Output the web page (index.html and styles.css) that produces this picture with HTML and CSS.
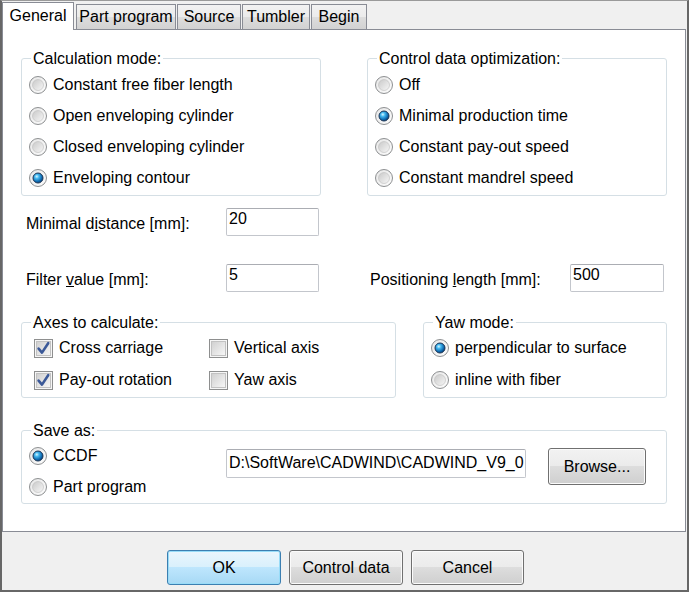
FILE: index.html
```html
<!DOCTYPE html>
<html>
<head>
<meta charset="utf-8">
<link rel="stylesheet" href="styles.css">
</head>
<body>
<svg class="defs" width="0" height="0" aria-hidden="true">
  <defs>
    <linearGradient id="rOuter" x1="0" y1="0" x2="1" y2="1">
      <stop offset="0" stop-color="#e6e6e6"/>
      <stop offset="1" stop-color="#fdfdfd"/>
    </linearGradient>
    <linearGradient id="rInner" x1="0" y1="0" x2="1" y2="1">
      <stop offset="0" stop-color="#c9c9c9"/>
      <stop offset="1" stop-color="#f7f7f7"/>
    </linearGradient>
    <radialGradient id="rDot" cx="0.38" cy="0.35" r="0.7">
      <stop offset="0" stop-color="#d8f6ff"/>
      <stop offset="0.3" stop-color="#43b8f0"/>
      <stop offset="0.75" stop-color="#0b63aa"/>
      <stop offset="1" stop-color="#073a6b"/>
    </radialGradient>
    <linearGradient id="cbInner" x1="0" y1="0" x2="1" y2="1">
      <stop offset="0" stop-color="#cfcfcf"/>
      <stop offset="1" stop-color="#f8f8f8"/>
    </linearGradient>
  </defs>
</svg>
<div class="window">
  <div class="tabs">
    <div class="tab tab-general active">General</div>
    <div class="tab tab-part">Part program</div>
    <div class="tab tab-source">Source</div>
    <div class="tab tab-tumbler">Tumbler</div>
    <div class="tab tab-begin">Begin</div>
  </div>
  <div class="panel">
    <div class="row-top">
      <fieldset class="group group-half">
        <legend>Calculation mode:</legend>
        <div class="opts">
          <div class="opt"><svg class="radio" viewBox="0 0 18 18"><circle cx="9" cy="9" r="8.5" fill="url(#rOuter)" stroke="#8d8f91"/><circle cx="9" cy="9" r="5.5" fill="url(#rInner)" stroke="#bdbdbd" stroke-width="0.6"/></svg><span>Constant free fiber length</span></div>
          <div class="opt"><svg class="radio" viewBox="0 0 18 18"><circle cx="9" cy="9" r="8.5" fill="url(#rOuter)" stroke="#8d8f91"/><circle cx="9" cy="9" r="5.5" fill="url(#rInner)" stroke="#bdbdbd" stroke-width="0.6"/></svg><span>Open enveloping cylinder</span></div>
          <div class="opt"><svg class="radio" viewBox="0 0 18 18"><circle cx="9" cy="9" r="8.5" fill="url(#rOuter)" stroke="#8d8f91"/><circle cx="9" cy="9" r="5.5" fill="url(#rInner)" stroke="#bdbdbd" stroke-width="0.6"/></svg><span>Closed enveloping cylinder</span></div>
          <div class="opt"><svg class="radio" viewBox="0 0 18 18"><circle cx="9" cy="9" r="8.5" fill="url(#rOuter)" stroke="#8d8f91"/><circle cx="9" cy="9" r="5" fill="url(#rDot)" stroke="#1b3556" stroke-width="1"/></svg><span>Enveloping contour</span></div>
        </div>
      </fieldset>
      <fieldset class="group group-half">
        <legend>Control data optimization:</legend>
        <div class="opts">
          <div class="opt"><svg class="radio" viewBox="0 0 18 18"><circle cx="9" cy="9" r="8.5" fill="url(#rOuter)" stroke="#8d8f91"/><circle cx="9" cy="9" r="5.5" fill="url(#rInner)" stroke="#bdbdbd" stroke-width="0.6"/></svg><span>Off</span></div>
          <div class="opt"><svg class="radio" viewBox="0 0 18 18"><circle cx="9" cy="9" r="8.5" fill="url(#rOuter)" stroke="#8d8f91"/><circle cx="9" cy="9" r="5" fill="url(#rDot)" stroke="#1b3556" stroke-width="1"/></svg><span>Minimal production time</span></div>
          <div class="opt"><svg class="radio" viewBox="0 0 18 18"><circle cx="9" cy="9" r="8.5" fill="url(#rOuter)" stroke="#8d8f91"/><circle cx="9" cy="9" r="5.5" fill="url(#rInner)" stroke="#bdbdbd" stroke-width="0.6"/></svg><span>Constant pay-out speed</span></div>
          <div class="opt"><svg class="radio" viewBox="0 0 18 18"><circle cx="9" cy="9" r="8.5" fill="url(#rOuter)" stroke="#8d8f91"/><circle cx="9" cy="9" r="5.5" fill="url(#rInner)" stroke="#bdbdbd" stroke-width="0.6"/></svg><span>Constant mandrel speed</span></div>
        </div>
      </fieldset>
    </div>

    <div class="fields">
      <label class="flabel first">Minimal d<u>i</u>stance [mm]:</label>
      <div class="text">20</div>
      <span></span><span></span><span></span>
      <label class="flabel first">Filter <u>v</u>alue [mm]:</label>
      <div class="text">5</div>
      <span></span>
      <label class="flabel">Positioning <u>l</u>ength [mm]:</label>
      <div class="text">500</div>
    </div>

    <div class="row-axes">
      <fieldset class="group group-axes">
        <legend>Axes to calculate:</legend>
        <div class="checks">
          <div class="check"><svg class="cbox" viewBox="0 0 19 19"><rect x="0.5" y="0.5" width="18" height="18" fill="#f6f6f6" stroke="#8e8f8f"/><rect x="2.5" y="2.5" width="14" height="14" fill="url(#cbInner)" stroke="#c2c2c2"/><path d="M4.6 9.6 L8 13.6 L14.2 4.2" fill="none" stroke="#3b5998" stroke-width="2.6" stroke-linecap="round" stroke-linejoin="round"/></svg><span>Cross carriage</span></div>
          <div class="check"><svg class="cbox" viewBox="0 0 19 19"><rect x="0.5" y="0.5" width="18" height="18" fill="#f6f6f6" stroke="#8e8f8f"/><rect x="2.5" y="2.5" width="14" height="14" fill="url(#cbInner)" stroke="#c2c2c2"/></svg><span>Vertical axis</span></div>
          <div class="check"><svg class="cbox" viewBox="0 0 19 19"><rect x="0.5" y="0.5" width="18" height="18" fill="#f6f6f6" stroke="#8e8f8f"/><rect x="2.5" y="2.5" width="14" height="14" fill="url(#cbInner)" stroke="#c2c2c2"/><path d="M4.6 9.6 L8 13.6 L14.2 4.2" fill="none" stroke="#3b5998" stroke-width="2.6" stroke-linecap="round" stroke-linejoin="round"/></svg><span>Pay-out rotation</span></div>
          <div class="check"><svg class="cbox" viewBox="0 0 19 19"><rect x="0.5" y="0.5" width="18" height="18" fill="#f6f6f6" stroke="#8e8f8f"/><rect x="2.5" y="2.5" width="14" height="14" fill="url(#cbInner)" stroke="#c2c2c2"/></svg><span>Yaw axis</span></div>
        </div>
      </fieldset>
      <fieldset class="group group-yaw">
        <legend>Yaw mode:</legend>
        <div class="opts opts-yaw">
          <div class="opt opt-tall"><svg class="radio" viewBox="0 0 18 18"><circle cx="9" cy="9" r="8.5" fill="url(#rOuter)" stroke="#8d8f91"/><circle cx="9" cy="9" r="5" fill="url(#rDot)" stroke="#1b3556" stroke-width="1"/></svg><span>perpendicular to surface</span></div>
          <div class="opt opt-tall"><svg class="radio" viewBox="0 0 18 18"><circle cx="9" cy="9" r="8.5" fill="url(#rOuter)" stroke="#8d8f91"/><circle cx="9" cy="9" r="5.5" fill="url(#rInner)" stroke="#bdbdbd" stroke-width="0.6"/></svg><span>inline with fiber</span></div>
        </div>
      </fieldset>
    </div>

    <fieldset class="group group-save">
      <legend>Save as:</legend>
      <div class="save">
        <div class="save-opts">
          <div class="opt"><svg class="radio" viewBox="0 0 18 18"><circle cx="9" cy="9" r="8.5" fill="url(#rOuter)" stroke="#8d8f91"/><circle cx="9" cy="9" r="5" fill="url(#rDot)" stroke="#1b3556" stroke-width="1"/></svg><span>CCDF</span></div>
          <div class="opt"><svg class="radio" viewBox="0 0 18 18"><circle cx="9" cy="9" r="8.5" fill="url(#rOuter)" stroke="#8d8f91"/><circle cx="9" cy="9" r="5.5" fill="url(#rInner)" stroke="#bdbdbd" stroke-width="0.6"/></svg><span>Part program</span></div>
        </div>
        <div class="text path">D:\SoftWare\CADWIND\CADWIND_V9_0</div>
        <div class="btn btn-browse">Browse...</div>
      </div>
    </fieldset>
  </div>
  <div class="footer">
    <div class="btn btn-default">OK</div>
    <div class="btn">Control data</div>
    <div class="btn btn-cancel">Cancel</div>
  </div>
</div>
</body>
</html>
```

FILE: styles.css
```css
* { box-sizing: border-box; }
html, body { margin: 0; padding: 0; }
body {
  font-family: "Liberation Sans", Arial, sans-serif;
  font-size: 16px;
  color: #000;
  background: #f0f0f0;
}
.defs { position: absolute; width: 0; height: 0; overflow: hidden; }

.window {
  width: 689px;
  height: 592px;
  border-top: 1px solid #9a9a9a;
  border-left: 2px solid #676767;
  border-right: 2px solid #676767;
  border-bottom: 2px solid #676767;
  background: #f0f0f0;
  display: flex;
  flex-direction: column;
}

/* tabs */
.tabs {
  flex: none;
  height: 28px;
  display: flex;
  align-items: flex-end;
}
.tab {
  height: 25px;
  border: 1px solid #898c95;
  border-bottom: none;
  background: linear-gradient(#f2f2f2 0%, #ebebeb 50%, #dddddd 51%, #d2d2d2 100%);
  text-align: center;
  line-height: 18px;
  padding-top: 3px;
  margin-left: 1px;
  white-space: nowrap;
}
.tab.active {
  height: 28px;
  margin-left: 0;
  margin-bottom: -1px;
  padding-top: 4px;
  background: #fff;
  position: relative;
  z-index: 1;
}
.tab-general { width: 72px; }
.tab-part { width: 100px; margin-left: 2px; }
.tab-source { width: 64px; }
.tab-tumbler { width: 68px; }
.tab-begin { width: 56px; }

/* panel */
.panel {
  flex: none;
  height: 503px;
  margin-right: 1px;
  background: #fff;
  border: 1px solid #898c95;
  padding: 20px 18px 0 18px;
  display: flex;
  flex-direction: column;
}

.group {
  margin: 0;
  padding: 0;
  border: 1px solid #d5dfe5;
  border-radius: 3px;
  min-width: 0;
}
.group legend {
  margin-left: 9px;
  padding: 0 2px;
  line-height: 17px;
}

.row-top {
  display: flex;
  justify-content: space-between;
}
.group-half { width: 300px; }

.opts { padding: 2px 0 2px 7px; }
.opt {
  height: 31px;
  display: flex;
  align-items: center;
  gap: 6px;
  white-space: nowrap;
}
.opt-tall { height: 32px; }
.opts-yaw { padding: 1px 0 1px 7px; }

.radio { width: 18px; height: 18px; flex: none; display: block; }
.cbox { width: 19px; height: 19px; flex: none; display: block; }

/* text fields */
.fields {
  margin-top: 12px;
  display: grid;
  grid-template-columns: 205px 93px 51px 200px 94px;
  grid-auto-rows: 28px;
  row-gap: 28px;
  align-items: start;
}
.flabel {
  padding-top: 7px;
  line-height: 18px;
  white-space: nowrap;
}
.flabel.first { padding-left: 5px; }
.text {
  height: 28px;
  border: 1px solid #c3c6cc;
  border-top-color: #abadb3;
  border-radius: 2px;
  background: #fff;
  padding: 1px 2px 0 2px;
  line-height: 18px;
  white-space: nowrap;
  overflow: hidden;
}

/* axes / yaw */
.row-axes {
  margin-top: 22px;
  display: flex;
  justify-content: space-between;
}
.group-axes { width: 375px; }
.group-yaw { width: 244px; }
.checks {
  display: grid;
  grid-template-columns: 175px 1fr;
  padding: 1px 0 1px 12px;
}
.check {
  height: 32px;
  display: flex;
  align-items: center;
  gap: 6px;
  white-space: nowrap;
}

/* save as */
.group-save { margin-top: 24px; }
.save {
  display: flex;
  align-items: flex-start;
  padding: 1px 0 1px 7px;
}
.save-opts { width: 197px; flex: none; }
.path {
  width: 300px;
  height: 29px;
  margin-top: 9px;
  flex: none;
  padding-top: 4px;
}

/* buttons */
.btn {
  display: flex;
  align-items: center;
  justify-content: center;
  width: 114px;
  height: 35px;
  border: 1px solid #707070;
  border-radius: 3px;
  background: linear-gradient(#f2f2f2 0%, #ebebeb 49%, #dddddd 50%, #cfcfcf 100%);
  box-shadow: inset 0 0 0 1px #fbfbfb;
  white-space: nowrap;
  flex: none;
}
.btn-default {
  border-color: #3c7fb1;
  background: linear-gradient(#eaf6fd 0%, #d9f0fc 49%, #bee6fd 50%, #a7d9f5 100%);
  box-shadow: inset 0 0 0 1px #98dcf8;
}
.btn-cancel { width: 113px; }
.btn.btn-browse {
  width: 98px;
  height: 37px;
  margin-top: 8px;
  margin-left: 22px;
}

.footer {
  flex: 1;
  display: flex;
  justify-content: center;
  gap: 8px;
  padding-top: 18px;
  padding-left: 2px;
}
```
